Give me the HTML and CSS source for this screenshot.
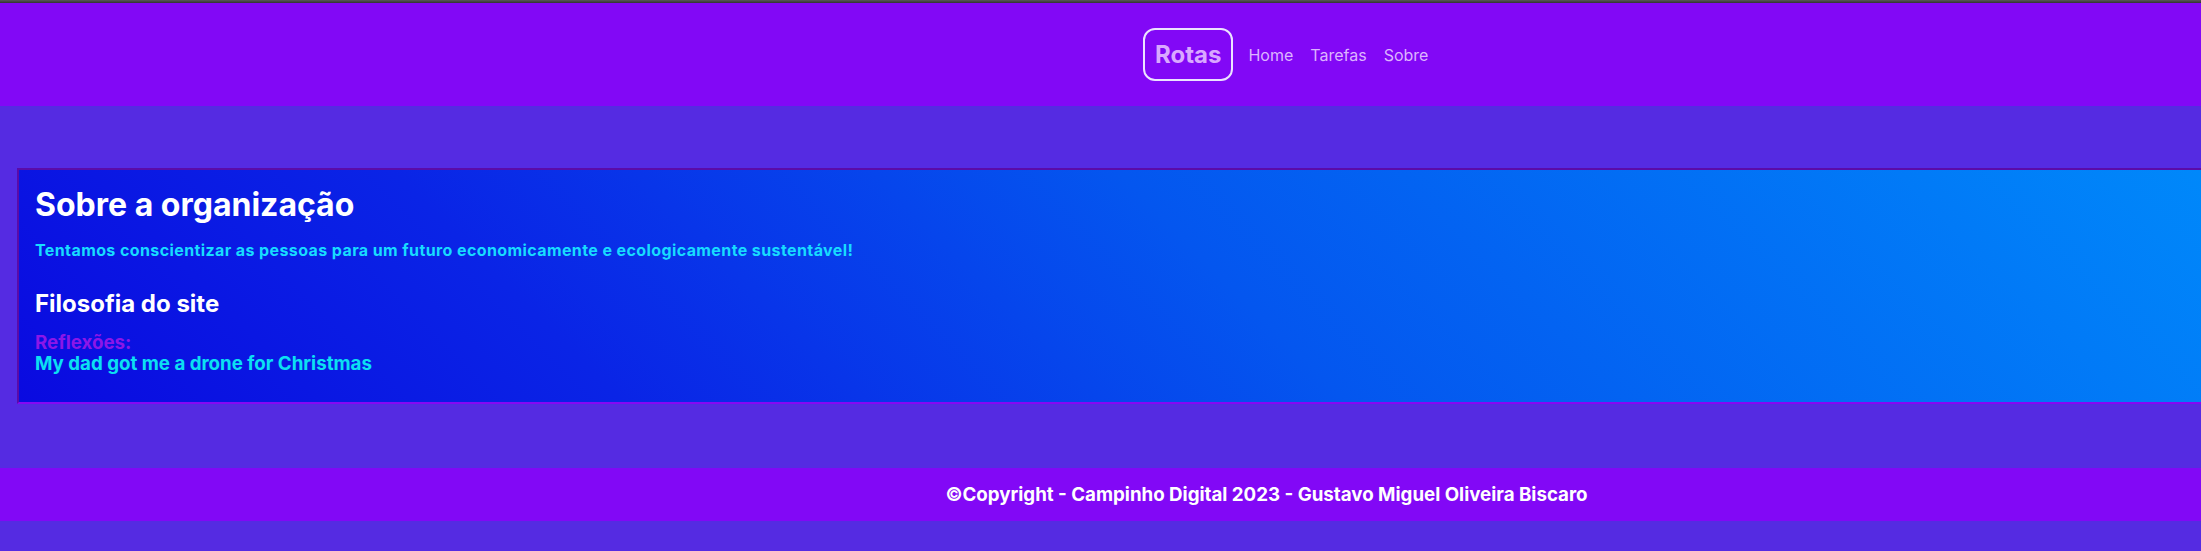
FILE: index.html
```html
<!DOCTYPE html>
<html lang="pt-BR">
<head>
<meta charset="utf-8">
<title>Sobre</title>
<link rel="stylesheet" href="styles.css">
</head>
<body>
<div class="topline"></div>
<header class="header">
  <nav class="nav">
    <a class="brand" href="#">Rotas</a>
    <a class="link" href="#">Home</a>
    <a class="link" href="#">Tarefas</a>
    <a class="link" href="#">Sobre</a>
  </nav>
</header>
<main class="main">
  <section class="card">
    <h1 class="title">Sobre a organização</h1>
    <p class="lead">Tentamos conscientizar as pessoas para um futuro economicamente e ecologicamente sustentável!</p>
    <h2 class="subtitle">Filosofia do site</h2>
    <p class="label">Reflexões:</p>
    <p class="quote">My dad got me a drone for Christmas</p>
  </section>
</main>
<footer class="footer">
  <p class="copy">©Copyright - Campinho Digital 2023 - Gustavo Miguel Oliveira Biscaro</p>
</footer>
</body>
</html>
```
FILE: styles.css
```css
* { box-sizing: border-box; }
html, body { margin: 0; padding: 0; }
body {
  background: #552be2;
  font-family: Inter, "Noto Sans", sans-serif;
  height: 551px;
  overflow: hidden;
}
.topline {
  height: 3px;
  background: linear-gradient(#585858, #333333);
}
.header {
  height: 103px;
  background: #8208f6;
  display: flex;
  align-items: center;
  padding-left: 1143px;
}
.nav {
  display: flex;
  align-items: center;
  gap: 17px;
}
.brand {
  display: block;
  border: 2px solid #ece2ff;
  border-radius: 12px;
  padding: 10px 10px;
  font-size: 24px;
  font-weight: 700;
  color: #d9a8ff;
  text-decoration: none;
  line-height: 29px;
  margin-right: -2px;
}
.link {
  font-size: 16px;
  color: #dcb4ff;
  text-decoration: none;
}
.main {
  padding: 62px 0 64px 17px;
}
.card {
  border-top: 2px solid #5b0ba8;
  border-left: 2px solid #5b0ba8;
  border-bottom: 2px solid #8508f4;
  background: linear-gradient(45deg, #0a0ae0 0%, #0a24e6 25%, #0456ef 55%, #0088fa 100%);
  padding: 16px 16px 0 16px;
  height: 236px;
}
.title {
  margin: 0 0 17px;
  font-size: 32px;
  font-weight: 700;
  color: #ffffff;
  line-height: 38px;
}
.lead {
  margin: 0 0 29px;
  font-size: 16px;
  letter-spacing: 0.4px;
  font-weight: 700;
  color: #17dcff;
  line-height: 19px;
}
.subtitle {
  margin: 0 0 15px;
  font-size: 24px;
  font-weight: 700;
  color: #ffffff;
  line-height: 29px;
}
.label {
  margin: 0;
  font-size: 18.72px;
  font-weight: 700;
  color: #8c16e8;
  line-height: 20.6px;
}
.quote {
  margin: 0;
  font-size: 18.72px;
  font-weight: 700;
  color: #0ce0f2;
  line-height: 20.6px;
}
.footer {
  height: 53px;
  background: #8208f6;
  display: flex;
  align-items: center;
  justify-content: center;
  padding-left: 332px;
}
.copy {
  margin: 0;
  font-size: 18.72px;
  font-weight: 700;
  color: #ffffff;
}
```
